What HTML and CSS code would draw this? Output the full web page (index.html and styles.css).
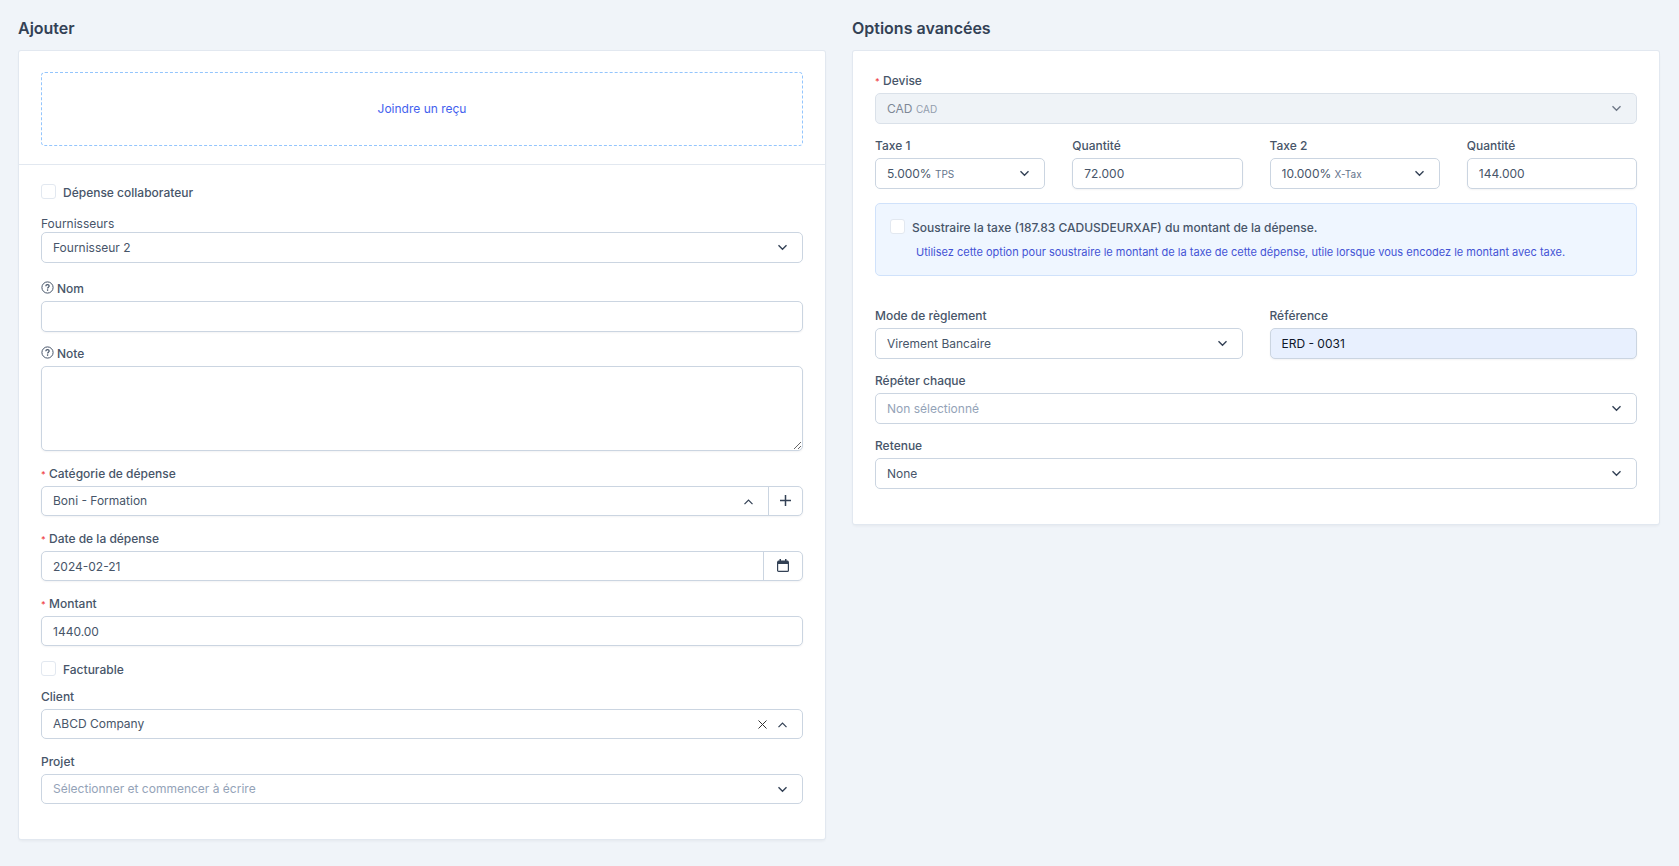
FILE: index.html
```html
<!DOCTYPE html>
<html lang="fr">
<head>
<meta charset="utf-8">
<title>Ajouter une dépense</title>
<meta name="viewport" content="width=device-width, initial-scale=1">
<link rel="stylesheet" href="styles.css">
</head>
<body>
<svg class="sprite" aria-hidden="true">
  <symbol id="down" viewBox="0 0 11 7"><path d="M1.5 1.2l4 4 4-4" fill="none" stroke="currentColor" stroke-width="1.4"/></symbol>
  <symbol id="up" viewBox="0 0 11 7"><path d="M1.5 6.2l4-4 4 4" fill="none" stroke="currentColor" stroke-width="1.2"/></symbol>
  <symbol id="help" viewBox="0 0 13 13"><circle cx="6.5" cy="6.5" r="5.6" fill="none" stroke="currentColor"/><path d="M4.8 5.2c0-1 .7-1.6 1.7-1.6s1.7.6 1.7 1.5c0 1.2-1.6 1.2-1.6 2.4" fill="none" stroke="currentColor" stroke-width="1.2"/><circle cx="6.6" cy="9.1" r=".8" fill="currentColor"/></symbol>
</svg>
<form class="page">
  <section class="column">
    <h2 class="title">Ajouter</h2>
    <div class="card">
      <div class="upload">
        <button type="button" class="dropzone">Joindre un reçu</button>
      </div>
      <div class="body">
        <label class="check"><input type="checkbox" class="box">Dépense collaborateur</label>

        <div class="field vendor">
          <label class="label plain" for="vendor">Fournisseurs</label>
          <div class="control">
            <select id="vendor" class="input"><option>Fournisseur 2</option></select>
            <svg class="chevron"><use href="#down"/></svg>
          </div>
        </div>

        <div class="field name">
          <label class="label" for="name"><svg class="help"><use href="#help"/></svg>Nom</label>
          <div class="control raised"><input id="name" class="input" type="text"></div>
        </div>

        <div class="field">
          <label class="label" for="note"><svg class="help"><use href="#help"/></svg>Note</label>
          <textarea id="note" class="note"></textarea>
        </div>

        <div class="compact">
          <div class="field">
            <label class="label" for="category"><span class="star">*</span>Catégorie de dépense</label>
            <div class="control raised">
              <select id="category" class="input"><option>Boni - Formation</option></select>
              <svg class="chevron"><use href="#up"/></svg>
              <button type="button" class="addon add" aria-label="Ajouter une catégorie">
                <svg width="11" height="11" viewBox="0 0 11 11"><path d="M5.5 0v11M0 5.5h11" stroke="currentColor" stroke-width="1.5"/></svg>
              </button>
            </div>
          </div>
          <div class="field">
            <label class="label" for="date"><span class="star">*</span>Date de la dépense</label>
            <div class="control raised">
              <input id="date" class="input" type="text" value="2024-02-21">
              <button type="button" class="addon calendar" aria-label="Choisir une date">
                <svg width="12" height="13" viewBox="0 0 12 13"><path d="M1.5 1.5h9a1 1 0 0 1 1 1V5H.5V2.5a1 1 0 0 1 1-1zM2.5 0H4v2H2.500zM8 0h1.500v2H8z" fill="currentColor"/><rect x=".6" y="2.6" width="10.8" height="9.8" rx="1" fill="none" stroke="currentColor" stroke-width="1.2"/></svg>
              </button>
            </div>
          </div>
          <div class="field">
            <label class="label" for="amount"><span class="star">*</span>Montant</label>
            <div class="control raised"><input id="amount" class="input" type="text" value="1440.00"></div>
          </div>
          <div class="billing">
            <label class="check"><input type="checkbox" class="box">Facturable</label>
            <div class="field">
              <label class="label" for="client">Client</label>
              <div class="control">
                <select id="client" class="input"><option>ABCD Company</option></select>
                <button type="button" class="clear" aria-label="Effacer">
                  <svg width="9" height="9" viewBox="0 0 9 9"><path d="M.5.5l8 8M8.5.5l-8 8" stroke="currentColor"/></svg>
                </button>
                <svg class="chevron"><use href="#up"/></svg>
              </div>
            </div>
          </div>
          <div class="field">
            <label class="label" for="project">Projet</label>
            <div class="control">
              <select id="project" class="input empty"><option>Sélectionner et commencer à écrire</option></select>
              <svg class="chevron"><use href="#down"/></svg>
            </div>
          </div>
        </div>
      </div>
    </div>
  </section>

  <section class="column">
    <h2 class="title">Options avancées</h2>
    <div class="card options">
      <div class="field">
        <label class="label" for="currency"><span class="star">*</span>Devise</label>
        <div class="control disabled">
          <select id="currency" class="input short" disabled><option>CAD</option></select>
          <span class="suffix">CAD</span>
          <svg class="chevron"><use href="#down"/></svg>
        </div>
      </div>

      <div class="row four">
        <div class="field">
          <label class="label" for="tax1">Taxe 1</label>
          <div class="control">
            <select id="tax1" class="input short"><option>5.000%</option></select>
            <span class="suffix">TPS</span>
            <svg class="chevron"><use href="#down"/></svg>
          </div>
        </div>
        <div class="field">
          <label class="label" for="qty1">Quantité</label>
          <div class="control raised"><input id="qty1" class="input" type="text" value="72.000"></div>
        </div>
        <div class="field">
          <label class="label" for="tax2">Taxe 2</label>
          <div class="control">
            <select id="tax2" class="input short"><option>10.000%</option></select>
            <span class="suffix">X-Tax</span>
            <svg class="chevron"><use href="#down"/></svg>
          </div>
        </div>
        <div class="field">
          <label class="label" for="qty2">Quantité</label>
          <div class="control raised"><input id="qty2" class="input" type="text" value="144.000"></div>
        </div>
      </div>

      <div class="notice">
        <label class="check"><input type="checkbox" class="box">Soustraire la taxe (187.83 CADUSDEURXAF) du montant de la dépense.</label>
        <p class="hint">Utilisez cette option pour soustraire le montant de la taxe de cette dépense, utile lorsque vous encodez le montant avec taxe.</p>
      </div>

      <div class="row two">
        <div class="field">
          <label class="label" for="method">Mode de règlement</label>
          <div class="control">
            <select id="method" class="input"><option>Virement Bancaire</option></select>
            <svg class="chevron"><use href="#down"/></svg>
          </div>
        </div>
        <div class="field">
          <label class="label" for="reference">Référence</label>
          <div class="control raised autofill"><input id="reference" class="input" type="text" value="ERD - 0031"></div>
        </div>
      </div>

      <div class="field">
        <label class="label" for="repeat">Répéter chaque</label>
        <div class="control">
          <select id="repeat" class="input empty"><option>Non sélectionné</option></select>
          <svg class="chevron"><use href="#down"/></svg>
        </div>
      </div>

      <div class="field">
        <label class="label" for="retainer">Retenue</label>
        <div class="control">
          <select id="retainer" class="input"><option>None</option></select>
          <svg class="chevron"><use href="#down"/></svg>
        </div>
      </div>
    </div>
  </section>
</form>
</body>
</html>
```

FILE: styles.css
```css
:root {
  --text: #475569;
  --border: #cbd5e1;
  --control-height: 31px;
}

* { box-sizing: border-box; }

body {
  margin: 0;
  background: #f0f4f9;
  color: var(--text);
  font: 400 12px/20px Inter, "Liberation Sans", sans-serif;
}

.sprite { display: none; }

.page {
  display: grid;
  grid-template-columns: repeat(2, minmax(0, 1fr));
  gap: 28px;
  align-items: start;
  padding: 16px 20px 24px 19px;
}

.title {
  margin: 0 0 11px -1px;
  color: #334155;
  font-size: 16px;
  font-weight: 600;
  line-height: 24px;
}

.card {
  background: #fff;
  border-radius: 2px;
  box-shadow: 0 0 0 1px #e2e8f0, 0 2px 3px rgba(30, 41, 59, 0.06);
}

.upload {
  padding: 21px 22px 18px;
  border-bottom: 1px solid #e2e8f0;
}

.dropzone {
  display: block;
  width: 100%;
  height: 74px;
  border: 1px dashed #93c5fd;
  border-radius: 4px;
  background: none;
  color: #4361ee;
  font: inherit;
  cursor: pointer;
}

.body { padding: 18px 22px 35px; }

.options {
  display: flex;
  flex-direction: column;
  gap: 12px;
  padding: 20px 22px 35px;
}

.check {
  display: flex;
  align-items: center;
  gap: 7px;
  font-weight: 500;
}

.box {
  appearance: none;
  width: 15px;
  height: 15px;
  margin: 0 0 3px;
  border: 1px solid #e2e8f0;
  border-radius: 3px;
  background: #fff;
}

.vendor { margin-top: 13px; }
.name { margin: 16px 0 12px; }

.compact {
  --control-height: 30px;
  display: flex;
  flex-direction: column;
  gap: 13px;
  margin-top: 13px;
}

.billing {
  display: flex;
  flex-direction: column;
  gap: 7px;
  padding-top: 1px;
}

.label {
  display: flex;
  align-items: center;
  width: fit-content;
  margin-bottom: 2px;
  font-weight: 500;
}

.plain {
  margin: 0;
  font-weight: 400;
  line-height: 16px;
}

.star {
  width: 8px;
  padding-top: 2px;
  color: #ef4444;
  font-size: 9px;
  line-height: 16px;
}

.help {
  width: 13px;
  height: 13px;
  margin: 0 3px 3px 0;
}

.control {
  display: flex;
  align-items: center;
  height: var(--control-height);
  border: 1px solid var(--border);
  border-radius: 5px;
  background: #fff;
}

.raised, .note { box-shadow: 0 1px 2px rgba(15, 23, 42, 0.05); }

.input {
  appearance: none;
  flex: 1;
  min-width: 0;
  height: 100%;
  margin: 0;
  padding: 0 0 0 11px;
  border: 0;
  border-radius: 5px;
  background: none;
  color: var(--text);
  font: inherit;
  outline: none;
}

.short { flex: none; }
.empty { color: #94a3b8; }

.suffix {
  margin: 1px auto 0 3px;
  color: #64748b;
  font-size: 10px;
}

.chevron {
  flex: none;
  width: 11px;
  height: 7px;
  margin-right: 14px;
  color: #334155;
}

.disabled {
  background: #e9eef5;
  opacity: 0.7;
}

.disabled .input { opacity: 1; }

.autofill { background: #e8f0fe; }
.autofill .input { color: #0f172a; }

.note {
  display: block;
  width: 100%;
  height: 85px;
  padding: 6px 11px;
  border: 1px solid var(--border);
  border-radius: 5px;
  background: #fff;
  color: var(--text);
  font: inherit;
  resize: vertical;
}

.addon {
  display: flex;
  align-items: center;
  justify-content: center;
  height: 100%;
  padding: 0 0 2px;
  border: 0;
  border-left: 1px solid var(--border);
  background: none;
  color: #334155;
}

.add { width: 34px; }
.calendar { width: 39px; }

.clear {
  display: flex;
  margin-right: 10px;
  padding: 0;
  border: 0;
  background: none;
  color: #333;
}

.row {
  display: grid;
  gap: 27px;
}

.four { grid-template-columns: repeat(4, minmax(0, 1fr)); }
.two { grid-template-columns: repeat(2, minmax(0, 1fr)); }

.notice {
  margin: 2px 0 18px;
  padding: 14px;
  border: 1px solid #d0e2fb;
  border-radius: 5px;
  background: #eff6ff;
}

.hint {
  margin: 5px 0 0 26px;
  color: #4353d5;
  font-size: 11px;
  line-height: 18px;
}
```
